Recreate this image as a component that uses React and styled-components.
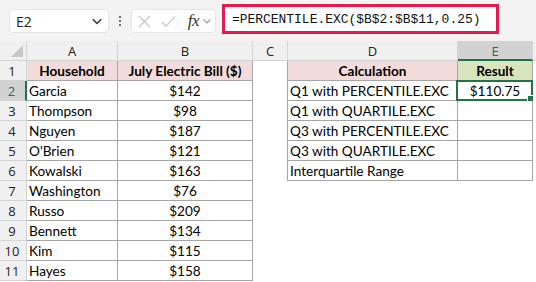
import styled, { createGlobalStyle } from 'styled-components'

const GlobalStyle = createGlobalStyle`
  html, body {
    margin: 0;
    padding: 0;
    background: #ffffff;
    overflow: hidden;
  }
  * { box-sizing: border-box; }
`;

const GREEN = '#217346';
const TABLE_LINE = '#a6a6a6';
const HEAD_LINE = '#d4d4d4';

const households = [
  ['Garcia', '$142'],
  ['Thompson', '$98'],
  ['Nguyen', '$187'],
  ["O'Brien", '$121'],
  ['Kowalski', '$163'],
  ['Washington', '$76'],
  ['Russo', '$209'],
  ['Bennett', '$134'],
  ['Kim', '$115'],
  ['Hayes', '$158'],
];

const calcs = [
  ['Q1 with PERCENTILE.EXC', '$110.75'],
  ['Q1 with QUARTILE.EXC', ''],
  ['Q3 with PERCENTILE.EXC', ''],
  ['Q3 with QUARTILE.EXC', ''],
  ['Interquartile Range', ''],
];

const Page = styled.div`
  width: 536px;
  height: 282px;
  background: #ffffff;
  font-family: 'Lato', 'Liberation Sans', sans-serif;
  overflow: hidden;
`;

const Toolbar = styled.div`
  height: 41px;
  background: #f3f3f3;
  display: flex;
  align-items: flex-start;
  padding: 9px 0 0 9px;
`;

const NameBox = styled.div`
  width: 100px;
  height: 24px;
  background: #ffffff;
  border: 1px solid #e3e3e3;
  border-radius: 4px;
  display: flex;
  align-items: center;
  justify-content: space-between;
  padding: 0 5px 0 6px;
  font-family: 'Open Sans', 'Liberation Sans', sans-serif;
  font-size: 14px;
  color: #222;
`;

const Dots = styled.div`
  width: 22px;
  height: 24px;
  display: flex;
  flex-direction: column;
  align-items: center;
  justify-content: center;
  gap: 2px;
`;

const Dot = styled.span`
  width: 2px;
  height: 2px;
  border-radius: 1px;
  background: #444;
`;

const FxBox = styled.div`
  width: 85px;
  height: 24px;
  background: #ffffff;
  border: 1px solid #e6e6e6;
  border-radius: 4px;
  display: flex;
  align-items: center;
  padding: 0 3px 0 6px;
  gap: 10px;
`;

const FxText = styled.span`
  font-family: 'Liberation Serif', serif;
  font-style: italic;
  font-size: 17px;
  color: #333;
  margin-left: 2px;
  margin-right: -7px;
  letter-spacing: -0.5px;
  line-height: 1;
  padding-bottom: 2px;
`;

const FormulaBar = styled.div`
  margin-top: -5px;
  margin-left: 6px;
  width: 277px;
  height: 30px;
  background: #ffffff;
  border: 3px solid #e31c4d;
  display: flex;
  align-items: center;
  padding-left: 7px;
  padding-top: 1px;
  font-family: 'Liberation Mono', monospace;
  font-size: 12.95px;
  color: #111;
  white-space: nowrap;
`;

const Grid = styled.div`
  display: grid;
  grid-template-columns: 27px 91px 135px 35px 170px 75px 1fr;
  grid-auto-rows: 20px;
`;

const ColHead = styled.div`
  background: ${p => (p.$active ? '#d2d2d2' : '#f0f0f0')};
  color: ${p => (p.$active ? GREEN : '#222')};
  border-right: 1px solid ${HEAD_LINE};
  border-bottom: ${p => (p.$active ? `2px solid ${GREEN}` : `1px solid ${HEAD_LINE}`)};
  font-family: 'Open Sans', 'Liberation Sans', sans-serif;
  font-size: 13px;
  display: flex;
  align-items: center;
  justify-content: center;
  padding-top: ${p => (p.$active ? '1px' : '0')};
`;

const Corner = styled.div`
  background: #f0f0f0;
  border-right: 1px solid ${HEAD_LINE};
  border-bottom: 1px solid ${HEAD_LINE};
  position: relative;
  &::after {
    content: '';
    position: absolute;
    right: 3px;
    bottom: 3px;
    width: 0;
    height: 0;
    border-left: 12px solid transparent;
    border-bottom: 12px solid #c8c8c8;
  }
`;

const RowHead = styled.div`
  background: ${p => (p.$active ? '#d2d2d2' : '#f0f0f0')};
  color: ${p => (p.$active ? GREEN : '#222')};
  border-right: ${p => (p.$active ? `2px solid ${GREEN}` : `1px solid ${HEAD_LINE}`)};
  border-bottom: 1px solid ${HEAD_LINE};
  font-family: 'Open Sans', 'Liberation Sans', sans-serif;
  font-size: 13px;
  display: flex;
  align-items: center;
  justify-content: center;
  padding-right: 2px;
  padding-top: 1px;
`;

const Cell = styled.div`
  position: relative;
  background: ${p => p.$bg || '#ffffff'};
  border-right: ${p => (p.$line ? `1px solid ${TABLE_LINE}` : 'none')};
  border-bottom: ${p => (p.$line ? `1px solid ${TABLE_LINE}` : 'none')};
  font-size: 13.6px;
  font-weight: ${p => (p.$bold ? 700 : 400)};
  color: #000;
  display: flex;
  align-items: flex-end;
  justify-content: ${p => (p.$center ? 'center' : 'flex-start')};
  padding: 0 2px 1px 2px;
  white-space: nowrap;
`;

const Spacer = styled.div`
  border-right: ${p => (p.$line ? `1px solid ${TABLE_LINE}` : 'none')};
`;

const ActiveFrame = styled.div`
  position: absolute;
  left: -2px;
  top: -1px;
  right: -1px;
  bottom: -1px;
  border: 2px solid ${GREEN};
  pointer-events: none;
  &::after {
    content: '';
    position: absolute;
    right: -4px;
    bottom: -4px;
    width: 6px;
    height: 6px;
    background: ${GREEN};
    border: 1px solid #fff;
  }
`;

function Chevron({ size = 10, color = '#444' }) {
  return (
    <svg width={size} height={size} viewBox="0 0 10 10">
      <path d="M1.5 3.5 L5 7 L8.5 3.5" fill="none" stroke={color} strokeWidth="1.2" />
    </svg>
  );
}

function App() {
  const rows = [];
  for (let r = 1; r <= 11; r++) {
    const hh = r === 1 ? ['Household', 'July Electric Bill ($)'] : households[r - 2];
    const calc = r === 1 ? ['Calculation', 'Result'] : calcs[r - 2];
    const head = r === 1;
    rows.push(
      <RowHead key={`h${r}`} $active={r === 2}>{r}</RowHead>,
      <Cell key={`a${r}`} $line $bold={head} $center={head} $bg={head ? '#f2dcdb' : null}>{hh[0]}</Cell>,
      <Cell key={`b${r}`} $line $bold={head} $center $bg={head ? '#f2dcdb' : null}>{hh[1]}</Cell>,
      <Spacer key={`c${r}`} $line={!!calc} />,
      calc ? (
        <Cell key={`d${r}`} $line $bold={head} $center={head} $bg={head ? '#f2dcdb' : null}>{calc[0]}</Cell>
      ) : <Cell key={`d${r}`} />,
      calc ? (
        <Cell key={`e${r}`} $line $bold={head} $center $bg={head ? '#d8e4bc' : null}>
          {calc[1]}
          {r === 2 && <ActiveFrame />}
        </Cell>
      ) : <Cell key={`e${r}`} />,
      <Cell key={`f${r}`} />
    );
  }

  return (
    <Page>
      <GlobalStyle />
      <Toolbar>
        <NameBox>
          <span>E2</span>
          <Chevron size={12} color="#333" />
        </NameBox>
        <Dots><Dot /><Dot /><Dot /></Dots>
        <FxBox>
          <svg width="13" height="13" viewBox="0 0 13 13">
            <path d="M1 1 L12 12 M12 1 L1 12" stroke="#c4c4c4" strokeWidth="1.2" fill="none" />
          </svg>
          <svg width="15" height="13" viewBox="0 0 15 13">
            <path d="M1 7 L5 11.5 L14 1.5" stroke="#c4c4c4" strokeWidth="1.2" fill="none" />
          </svg>
          <FxText>fx</FxText>
          <Chevron size={10} color="#999" />
        </FxBox>
        <FormulaBar>=PERCENTILE.EXC($B$2:$B$11,0.25)</FormulaBar>
      </Toolbar>
      <Grid>
        <Corner />
        <ColHead>A</ColHead>
        <ColHead>B</ColHead>
        <ColHead>C</ColHead>
        <ColHead>D</ColHead>
        <ColHead $active>E</ColHead>
        <ColHead />
        {rows}
      </Grid>
    </Page>
  );
}

export default App
